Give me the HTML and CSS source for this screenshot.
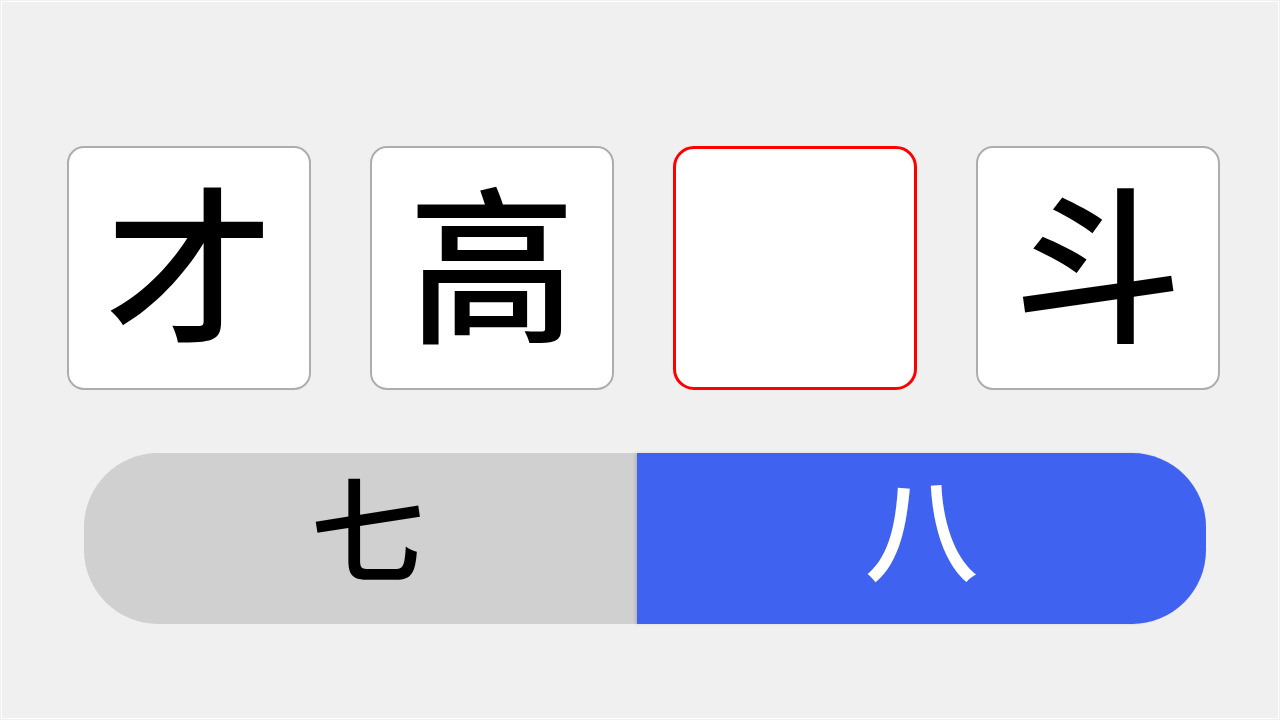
FILE: index.html
```html
<!DOCTYPE html>
<html lang="zh">
<head>
<meta charset="utf-8">
<title>Quiz</title>
<link rel="stylesheet" href="styles.css">
</head>
<body>
<div class="screen">
  <div class="tiles">
    <div class="tile"><span class="ch">才</span></div>
    <div class="tile"><span class="ch">高</span></div>
    <div class="tile tile-empty"></div>
    <div class="tile"><span class="ch">斗</span></div>
  </div>
  <div class="choices">
    <div class="choice choice-off"><span>七</span></div>
    <div class="choice choice-on"><span>八</span></div>
  </div>
</div>
</body>
</html>
```
FILE: styles.css
```css
html, body {
  margin: 0;
  padding: 0;
  background: #f0f0f0;
}
body {
  width: 1280px;
  height: 720px;
  padding: 1px;
  box-sizing: border-box;
  font-family: "Noto Sans CJK SC", "Noto Sans CJK JP", sans-serif;
}
.screen {
  height: 718px;
  border: 1px solid #ffffff;
  box-sizing: border-box;
  padding-top: 144px;
}
.tiles {
  display: flex;
  gap: 59px;
  padding-left: 65px;
}
.tile {
  width: 244px;
  height: 244px;
  box-sizing: border-box;
  background: #ffffff;
  border: 2px solid #adadad;
  border-radius: 17px;
  display: flex;
  align-items: center;
  justify-content: center;
  padding-bottom: 22px;
}
.tile-empty {
  border: 3px solid #ff0000;
  border-radius: 21px;
}
.ch {
  font-size: 168px;
  line-height: 1.1;
  font-weight: 500;
  color: #000;
}
.choices {
  display: flex;
  margin-top: 63px;
  margin-left: 82px;
  width: 1122px;
  height: 171px;
}
.choice {
  display: flex;
  align-items: center;
  justify-content: center;
  font-size: 114px;
  line-height: 1.2;
  font-weight: 500;
  padding-bottom: 28px;
  box-sizing: border-box;
}
.choice span {
  display: block;
}
.choice-off {
  width: 553px;
  background: #d0d0d0;
  color: #000;
  padding-left: 14px;
  border-radius: 74px 0 0 74px;
}
.choice-on {
  flex: 1;
  background: #3f63f0;
  color: #fff;
  border-radius: 0 74px 74px 0;
  box-shadow: -2px 0 3px rgba(0, 0, 0, 0.12);
}
```
